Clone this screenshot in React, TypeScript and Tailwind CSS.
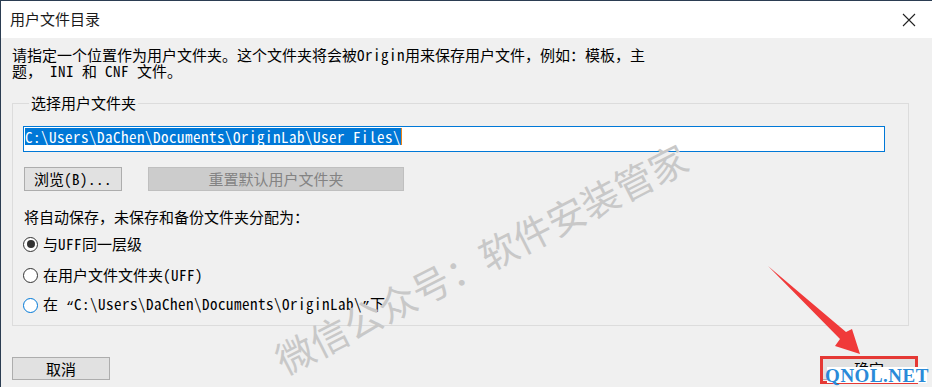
import React from "react";

const mono = "font-['Noto_Sans_Mono_CJK_SC','Liberation_Mono','Noto_Sans_CJK_SC',monospace]";

// latin runs are a touch wider than the CJK font's half-width
const L: React.FC<{ children: React.ReactNode }> = ({ children }) => (
  <span className="tracking-[0.5px]">{children}</span>
);

const Q: React.FC<{ children: React.ReactNode }> = ({ children }) => (
  <span className="font-['Liberation_Mono',monospace] text-[13.33px]">{children}</span>
);

const Radio: React.FC<{ checked?: boolean; focused?: boolean; className?: string; children: React.ReactNode }> = ({
  checked,
  focused,
  className,
  children,
}) => (
  <div className={`flex items-center h-[16px] ${className ?? ""}`}>
    <span
      className={`w-[15px] h-[15px] rounded-full border bg-white flex items-center justify-center ${
        focused ? "border-[#0078d7]" : "border-[#333333]"
      }`}
    >
      {checked && <span className="w-[8px] h-[8px] rounded-full bg-[#333333]" />}
    </span>
    <span className="ml-[5px] whitespace-nowrap">{children}</span>
  </div>
);

const App: React.FC = () => {
  return (
    <div className="relative w-[932px] h-[387px] overflow-hidden bg-[#f0f0f0] border-l border-t border-[#2b3d52] text-[#000000]">
      {/* title bar */}
      <div className="h-[37px] bg-white flex items-center justify-between pl-[9px] pr-[12px]">
        <span className="text-[15px] font-['Noto_Sans_CJK_SC',sans-serif] text-[#1a1a1a]">用户文件目录</span>
        <svg width="14" height="14" viewBox="0 0 14 14" className="mr-[4px]">
          <path d="M1 1 L13 13 M13 1 L1 13" stroke="#222" strokeWidth="1.1" />
        </svg>
      </div>

      <div className={`${mono} text-[15px] leading-[16px] pl-[11px]`}>
        <p className="pt-[9px] whitespace-nowrap">
          请指定一个位置作为用户文件夹。这个文件夹将会被<L>Origin</L>用来保存用户文件，例如：模板，主
          <br />
          题，<L> INI </L>和<L> CNF </L>文件。
        </p>

        <fieldset className="mt-[16px] w-[897px] border border-[#dcdcdc] pl-[10px] pb-[12px]">
          <legend className="ml-[6px] px-[2px] leading-[16px]">选择用户文件夹</legend>

          <div className="mt-[15px] w-[862px] h-[26px] border border-[#0078d7] bg-white pl-[1px] pt-[1px] flex items-start">
            <span className="bg-[#0078d7] text-white leading-[17px] whitespace-nowrap tracking-[0.5px]">
              C:\Users\DaChen\Documents\OriginLab\User Files\
            </span>
            <span className="w-[1px] h-[17px] bg-[#e8831a]" />
          </div>

          <div className="mt-[15px] ml-[1px] flex gap-[26px]">
            <button className="w-[98px] h-[24px] bg-[#e1e1e1] border border-[#adadad] leading-[16px]">
              浏览<L>(B)...</L>
            </button>
            <button className="w-[256px] h-[24px] bg-[#cccccc] border border-[#bfbfbf] text-[#838383] leading-[16px]">
              重置默认用户文件夹
            </button>
          </div>

          <p className="mt-[18px] ml-[1px]">将自动保存，未保存和备份文件夹分配为：</p>

          <Radio checked className="mt-[11px]">
            与<L>UFF</L>同一层级
          </Radio>
          <Radio className="mt-[15px]">
            在用户文件文件夹<L>(UFF)</L>
          </Radio>
          <Radio focused className="mt-[14px]">
            在<L> </L>
            <Q>“</Q>
            <L>C:\Users\DaChen\Documents\OriginLab\</L>
            <Q>”</Q>下
          </Radio>
        </fieldset>

        <div className="mt-[31px] w-[905px] flex justify-between">
          <button className="w-[98px] h-[23px] bg-[#e1e1e1] border border-[#adadad] leading-[16px]">取消</button>
          <button className="w-[96px] h-[23px] bg-[#e1e1e1] border border-[#adadad] leading-[16px]">确定</button>
        </div>
      </div>

      {/* watermark */}
      <div className="absolute left-[480px] top-[257px] -translate-x-1/2 -translate-y-1/2 rotate-[-27deg] whitespace-nowrap text-[38px] leading-none text-[#c8c8c8] font-['Noto_Sans_CJK_SC',sans-serif] pointer-events-none">
        微信公众号：软件安装管家
      </div>

      {/* red annotation */}
      <svg className="absolute left-0 top-0 pointer-events-none" width="932" height="387" viewBox="-1 -1 932 387">
        <polygon points="766,264 844,330 850,327 858,352 833,344 838,337" fill="#f03a3a" />
      </svg>
      <div className="absolute left-[819px] top-[355px] w-[98px] h-[28px] border-[3px] border-[#e53935] pointer-events-none" />
      <div className="absolute left-[826px] top-[366px] w-[100px] h-[16px] bg-white flex items-center justify-center font-['Liberation_Serif',serif] font-bold text-[19px] leading-none text-[#2a8ad8] tracking-[0.5px]">
        QNOL.NET
      </div>
    </div>
  );
};

export default App;
